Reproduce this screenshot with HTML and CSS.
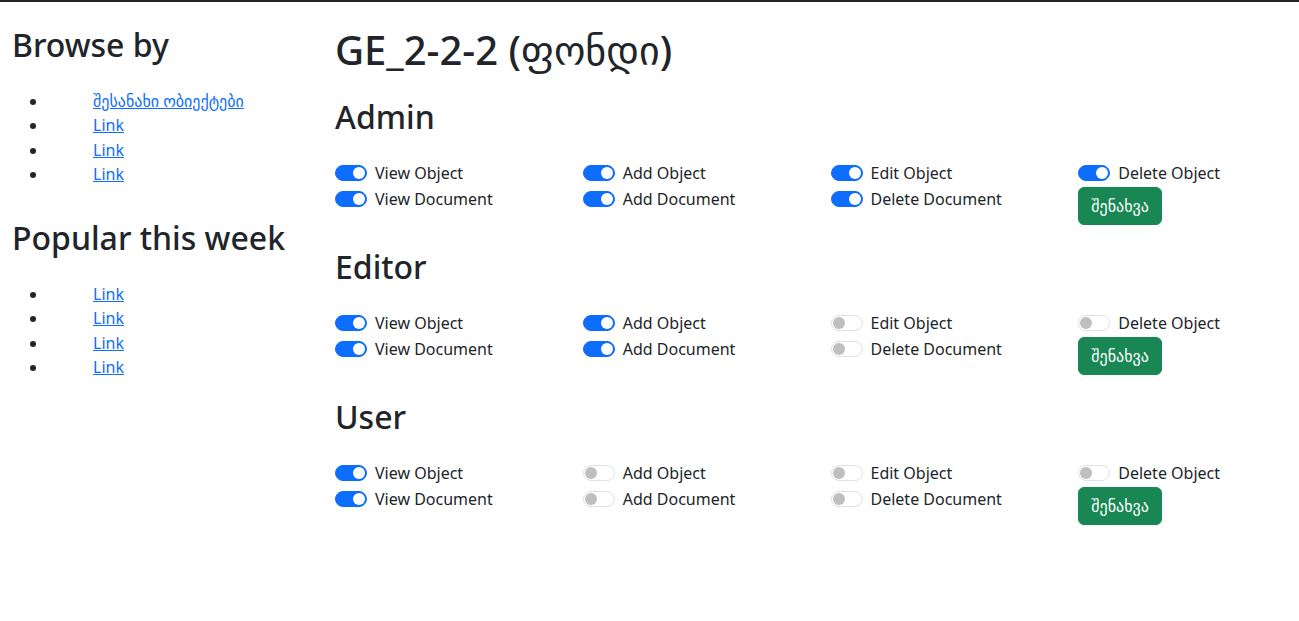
FILE: index.html
```html
<!DOCTYPE html>
<html lang="ka">
<head>
<meta charset="utf-8">
<title>GE_2-2-2</title>
<link rel="stylesheet" href="styles.css">
</head>
<body>
<div class="layout">
  <aside class="sidebar">
    <h2 class="side-title">Browse by</h2>
    <ul class="side-list">
      <li><a href="#">შესანახი ობიექტები</a></li>
      <li><a href="#">Link</a></li>
      <li><a href="#">Link</a></li>
      <li><a href="#">Link</a></li>
    </ul>
    <h2 class="side-title">Popular this week</h2>
    <ul class="side-list">
      <li><a href="#">Link</a></li>
      <li><a href="#">Link</a></li>
      <li><a href="#">Link</a></li>
      <li><a href="#">Link</a></li>
    </ul>
  </aside>
  <main class="main">
    <h1 class="page-title">GE_2-2-2 (ფონდი)</h1>

    <section class="role">
      <h2 class="role-title">Admin</h2>
      <div class="perm-grid">
        <div class="perm-col">
          <label class="check"><span class="switch on"></span>View Object</label>
          <label class="check"><span class="switch on"></span>View Document</label>
        </div>
        <div class="perm-col">
          <label class="check"><span class="switch on"></span>Add Object</label>
          <label class="check"><span class="switch on"></span>Add Document</label>
        </div>
        <div class="perm-col">
          <label class="check"><span class="switch on"></span>Edit Object</label>
          <label class="check"><span class="switch on"></span>Delete Document</label>
        </div>
        <div class="perm-col">
          <label class="check"><span class="switch on"></span>Delete Object</label>
          <button class="btn-save" type="button">შენახვა</button>
        </div>
      </div>
    </section>

    <section class="role">
      <h2 class="role-title">Editor</h2>
      <div class="perm-grid">
        <div class="perm-col">
          <label class="check"><span class="switch on"></span>View Object</label>
          <label class="check"><span class="switch on"></span>View Document</label>
        </div>
        <div class="perm-col">
          <label class="check"><span class="switch on"></span>Add Object</label>
          <label class="check"><span class="switch on"></span>Add Document</label>
        </div>
        <div class="perm-col">
          <label class="check"><span class="switch"></span>Edit Object</label>
          <label class="check"><span class="switch"></span>Delete Document</label>
        </div>
        <div class="perm-col">
          <label class="check"><span class="switch"></span>Delete Object</label>
          <button class="btn-save" type="button">შენახვა</button>
        </div>
      </div>
    </section>

    <section class="role">
      <h2 class="role-title">User</h2>
      <div class="perm-grid">
        <div class="perm-col">
          <label class="check"><span class="switch on"></span>View Object</label>
          <label class="check"><span class="switch on"></span>View Document</label>
        </div>
        <div class="perm-col">
          <label class="check"><span class="switch"></span>Add Object</label>
          <label class="check"><span class="switch"></span>Add Document</label>
        </div>
        <div class="perm-col">
          <label class="check"><span class="switch"></span>Edit Object</label>
          <label class="check"><span class="switch"></span>Delete Document</label>
        </div>
        <div class="perm-col">
          <label class="check"><span class="switch"></span>Delete Object</label>
          <button class="btn-save" type="button">შენახვა</button>
        </div>
      </div>
    </section>
  </main>
</div>
</body>
</html>
```

FILE: styles.css
```css
* { box-sizing: border-box; }
html, body { overflow-x: hidden; }
body {
  margin: 0;
  border-top: 2px solid #212529;
  font-family: "Noto Sans", "DejaVu Sans", sans-serif;
  font-size: 16px;
  line-height: 1.5;
  color: #212529;
  background: #fff;
}
.layout {
  display: grid;
  grid-template-columns: 323px 1fr;
}
.sidebar {
  padding: 24px 12px 0 12px;
}
.side-title {
  margin: 0 0 24.5px;
  font-size: 32px;
  font-weight: 500;
  line-height: 1.2;
}
.side-list {
  margin: 0 0 33px;
  padding-left: 36px;
}
.side-list li { line-height: 24.33px; }
.side-list a {
  margin-left: 45px;
  color: #0d6efd;
  text-decoration: underline;
}
.main {
  padding: 24px 0 0 12px;
}
.page-title {
  margin: 0 0 24px;
  font-size: 40px;
  font-weight: 500;
  line-height: 1.2;
}
.role { margin-bottom: 22.5px; }
.role-title {
  margin: 0 0 25px;
  font-size: 32px;
  font-weight: 500;
  line-height: 1.2;
}
.perm-grid {
  display: grid;
  grid-template-columns: 247.75px 247.75px 247.75px 1fr;
}
.perm-col {
  display: flex;
  flex-direction: column;
  align-items: flex-start;
}
.check {
  display: flex;
  align-items: center;
  gap: 8px;
  height: 26px;
  line-height: 24px;
  padding-bottom: 2px;
}
.switch {
  position: relative;
  width: 32px;
  height: 16px;
  border-radius: 8px;
  border: 1px solid #dee2e6;
  background: #fff;
  flex: none;
}
.switch::after {
  content: "";
  position: absolute;
  top: 1px;
  left: 1px;
  width: 12px;
  height: 12px;
  border-radius: 50%;
  background: #bfbfbf;
}
.switch.on {
  background: #0d6efd;
  border-color: #0d6efd;
}
.switch.on::after {
  left: auto;
  right: 1px;
  background: #fff;
}
.btn-save {
  height: 38px;
  padding: 6px 12px;
  border: 1px solid #198754;
  border-radius: 6px;
  background: #198754;
  color: #fff;
  font-family: "Noto Sans", "DejaVu Sans", sans-serif;
  font-size: 16px;
  line-height: 24px;
}
```
